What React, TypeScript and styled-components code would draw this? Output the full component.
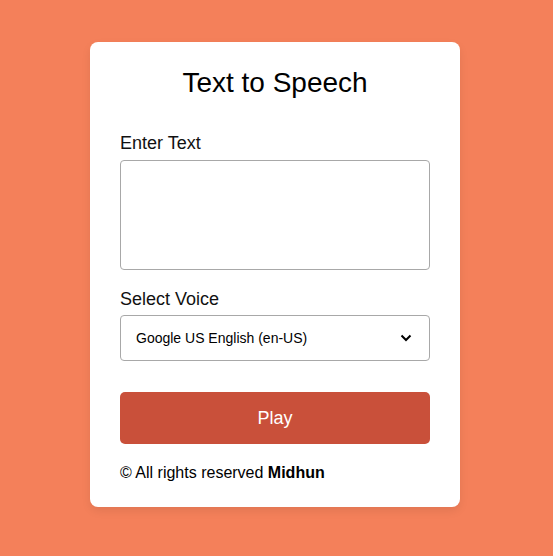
import React from "react";
import styled, { createGlobalStyle } from "styled-components";

const Global = createGlobalStyle`
  html, body { margin: 0; padding: 0; }
  body {
    background: #f4805a;
    font-family: "Liberation Sans", Arial, sans-serif;
    min-height: 556px;
  }
`;

const Page = styled.div`
  display: flex;
  justify-content: center;
  padding-top: 42px;
  padding-right: 3px;
`;

const Card = styled.div`
  width: 370px;
  box-sizing: border-box;
  background: #ffffff;
  border-radius: 8px;
  padding: 25px 30px 25px;
  box-shadow: 0 4px 10px rgba(0, 0, 0, 0.08);
  display: flex;
  flex-direction: column;
`;

const Title = styled.h1`
  margin: 0;
  font-size: 28px;
  font-weight: 400;
  line-height: 32px;
  text-align: center;
  color: #000;
`;

const Label = styled.label<{ $top: number }>`
  display: block;
  margin-top: ${(p) => p.$top}px;
  font-size: 18px;
  line-height: 20px;
  color: #111;
`;

const TextArea = styled.textarea`
  margin-top: 7px;
  box-sizing: border-box;
  width: 100%;
  height: 110px;
  border: 1px solid #a8a8a8;
  border-radius: 4px;
  resize: none;
  font-family: inherit;
  padding: 8px;
`;

const SelectWrap = styled.div`
  position: relative;
  margin-top: 6px;
`;

const Select = styled.select`
  box-sizing: border-box;
  width: 100%;
  height: 46px;
  appearance: none;
  border: 1px solid #a8a8a8;
  border-radius: 4px;
  background: #fff;
  padding: 0 15px;
  font-family: inherit;
  font-size: 14px;
  color: #000;
`;

const Chevron = styled.svg`
  position: absolute;
  right: 18px;
  top: 17px;
  pointer-events: none;
`;

const PlayButton = styled.button`
  margin-top: 31px;
  height: 52px;
  border: none;
  border-radius: 5px;
  background: #c9503a;
  color: #fff;
  font-family: inherit;
  font-size: 18px;
`;

const Footer = styled.p`
  margin: 20px 0 0;
  font-size: 16px;
  line-height: 18px;
  color: #000;
`;

export default function App() {
  return (
    <>
      <Global />
      <Page>
        <Card>
          <Title>Text to Speech</Title>
          <Label $top={34}>Enter Text</Label>
          <TextArea />
          <Label $top={19}>Select Voice</Label>
          <SelectWrap>
            <Select defaultValue="g">
              <option value="g">Google US English (en-US)</option>
            </Select>
            <Chevron width="12" height="12" viewBox="0 0 12 12">
              <path d="M1.5 3.5 L6 8 L10.5 3.5" fill="none" stroke="#000" strokeWidth="2" />
            </Chevron>
          </SelectWrap>
          <PlayButton>Play</PlayButton>
          <Footer>
            © All rights reserved <b>Midhun</b>
          </Footer>
        </Card>
      </Page>
    </>
  );
}
